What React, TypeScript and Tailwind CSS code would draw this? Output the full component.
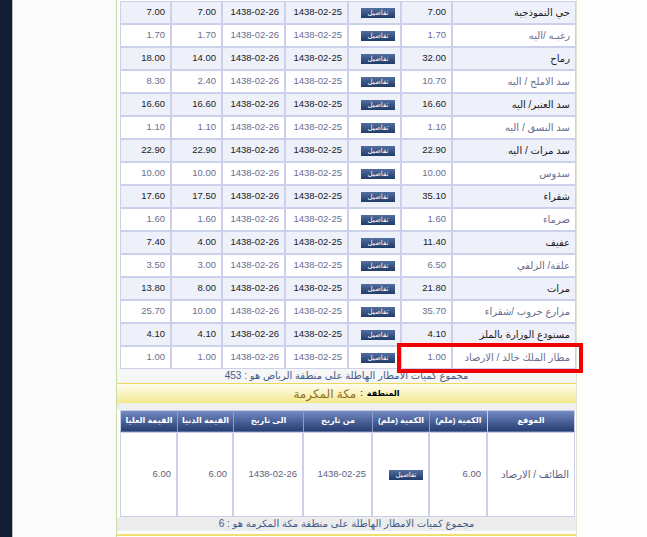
import React from 'react'

const rows = [
  { name: 'حي النموذجية', amount: '7.00', min: '7.00', max: '7.00' },
  { name: 'رغبـه /اليه', amount: '1.70', min: '1.70', max: '1.70' },
  { name: 'رماح', amount: '32.00', min: '14.00', max: '18.00' },
  { name: 'سد الاملح / اليه', amount: '10.70', min: '2.40', max: '8.30' },
  { name: 'سد العنبر/ اليه', amount: '16.60', min: '16.60', max: '16.60' },
  { name: 'سد النسق / اليه', amount: '1.10', min: '1.10', max: '1.10' },
  { name: 'سد مرات / اليه', amount: '22.90', min: '22.90', max: '22.90' },
  { name: 'سدوس', amount: '10.00', min: '10.00', max: '10.00' },
  { name: 'شقراء', amount: '35.10', min: '17.50', max: '17.60' },
  { name: 'ضرماء', amount: '1.60', min: '1.60', max: '1.60' },
  { name: 'عفيف', amount: '11.40', min: '4.00', max: '7.40' },
  { name: 'علقة/ الزلفي', amount: '6.50', min: '3.00', max: '3.50' },
  { name: 'مرات', amount: '21.80', min: '8.00', max: '13.80' },
  { name: 'مزارع خروب /شقراء', amount: '35.70', min: '10.00', max: '25.70' },
  { name: 'مستودع الوزارة بالملز', amount: '4.10', min: '4.10', max: '4.10' },
  { name: 'مطار الملك خالد / الارصاد', amount: '1.00', min: '1.00', max: '1.00' },
]

const font = { fontFamily: '"Liberation Sans", "DejaVu Sans", sans-serif' }

function DetailsButton() {
  return (
    <span className="inline-block w-[34px] h-[10px] bg-gradient-to-b from-[#52709f] to-[#1f3c6b] text-white text-[7px] leading-[10px] text-center align-middle">
      تفاصيل
    </span>
  )
}

const cell = 'border border-[#ccd0ea] pr-[5px] text-right align-middle'
const head = 'border-y border-l border-[#c9cfe8] border-b-[#5a6e9e] border-l-[#8fa0cc]'

export default function App() {
  return (
    <main className="flex h-[537px] overflow-hidden bg-[#fbfbfb]" style={font}>
      {/* dark side strip */}
      <div className="w-[13px] shrink-0 bg-[#111f33] border-r border-[#bdbdbd]" />
      <div className="w-[103px] shrink-0" />

      <div className="w-[461px] shrink-0 flex flex-col bg-white border-l border-[#c7dba8] border-r border-r-[#dde5d3]">
        <div className="h-[1px]" />

        {/* Riyadh table */}
        <div className="relative">
          <table dir="rtl" className="ml-[3px] w-[456px] table-fixed border-separate border-spacing-0 text-[9.5px]">
            <tbody>
              {rows.map((r, i) => {
                const odd = i % 2 === 0
                const row = odd ? 'bg-[#eef1fa] text-[#1b1b1b]' : 'bg-white text-[#6b6d8f]'
                return (
                  <tr key={i} className={`${row} h-[23px]`}>
                    <td className={`${cell} w-[124px] pr-[3px] text-[10px]`}>{r.name}</td>
                    <td className={`${cell} w-[51px]`}>{r.amount}</td>
                    <td className={`${cell} w-[53px]`}><DetailsButton /></td>
                    <td className={`${cell} w-[63px]`}>1438-02-25</td>
                    <td className={`${cell} w-[63px]`}>1438-02-26</td>
                    <td className={`${cell} w-[51px]`}>{r.min}</td>
                    <td className={`${cell} w-[51px]`}>{r.max}</td>
                  </tr>
                )
              })}
            </tbody>
          </table>
          {/* highlight mark */}
          <div className="absolute left-[280px] top-[342px] w-[186px] h-[30px] border-[4px] border-[#f00000]" />
        </div>

        <div dir="rtl" className="h-[14px] bg-[#f6f6f6] text-center text-[10px] leading-[14px] text-[#3f5a88]">
          مجموع كميات الامطار الهاطلة على منطقة الرياض هو : 453
        </div>

        {/* region bar */}
        <div dir="rtl" className="h-[20px] border-t border-[#ecd95c] bg-gradient-to-b from-[#fffdf0] to-[#f4e88a] flex items-center justify-center gap-[4px]">
          <span className="text-[8px] font-bold text-black">المنطقة</span>
          <span className="text-[9px] text-black">:</span>
          <span className="text-[12px] text-[#8e6d1c]">مكة المكرمة</span>
        </div>

        <div className="h-[7px] bg-[#efefef]" />

        {/* Makkah table */}
        <table dir="rtl" className="ml-[3px] w-[455px] table-fixed border-separate border-spacing-0 text-[9.5px]">
          <thead>
            <tr className="h-[22px] bg-gradient-to-b from-[#7890c6] to-[#243a70] text-white text-[8px] font-bold">
              <th className="w-[88px] border border-[#c9cfe8] border-b-[#5a6e9e]">الموقع</th>
              <th className={`w-[58px] ${head}`}>الكمية (ملم)</th>
              <th className={`w-[57px] ${head}`}>الكمية (ملم)</th>
              <th className={`w-[69px] ${head}`}>من تاريخ</th>
              <th className={`w-[70px] ${head}`}>الى تاريخ</th>
              <th className={`w-[56px] ${head}`}>القيمة الدنيا</th>
              <th className="w-[57px] border-y border-l border-[#c9cfe8] border-b-[#5a6e9e]">القيمة العليا</th>
            </tr>
          </thead>
          <tbody>
            <tr className="h-[85px] bg-white text-[#5d5f80]">
              <td className={`${cell} text-[10px]`}>الطائف / الارصاد</td>
              <td className={cell}>6.00</td>
              <td className={cell}><DetailsButton /></td>
              <td className={cell}>1438-02-25</td>
              <td className={cell}>1438-02-26</td>
              <td className={cell}>6.00</td>
              <td className={cell}>6.00</td>
            </tr>
          </tbody>
        </table>

        <div dir="rtl" className="h-[14px] bg-[#ececec] text-center text-[10px] leading-[14px] text-[#3f5a88]">
          مجموع كميات الامطار الهاطلة على منطقة مكة المكرمة هو : 6
        </div>
        <div className="h-[3px] bg-white" />
        <div className="h-[2px] bg-[#efdf6e]" />
      </div>

      <div className="flex-1 bg-[#fdfdfd]" />
    </main>
  )
}
